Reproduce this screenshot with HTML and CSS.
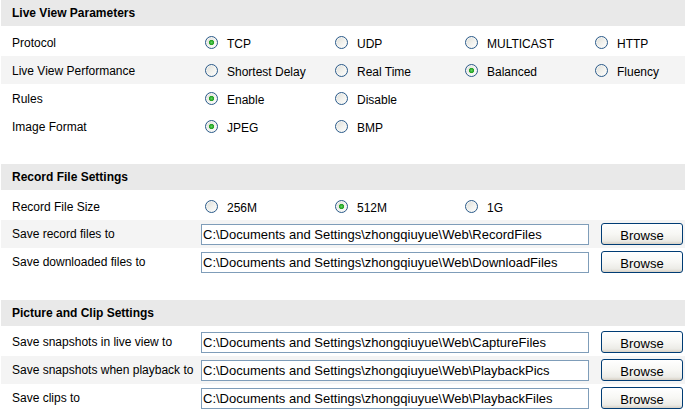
FILE: index.html
```html
<!DOCTYPE html>
<html>
<head>
<meta charset="utf-8">
<title>Local Configuration</title>
<link rel="stylesheet" href="styles.css">
</head>
<body>
<div class="page">
  <section class="group">
    <div class="group-title">Live View Parameters</div>
    <div class="row">
      <div class="label">Protocol</div>
      <div class="options">
        <label class="opt"><input type="radio" name="protocol" checked><span>TCP</span></label>
        <label class="opt"><input type="radio" name="protocol"><span>UDP</span></label>
        <label class="opt"><input type="radio" name="protocol"><span>MULTICAST</span></label>
        <label class="opt"><input type="radio" name="protocol"><span>HTTP</span></label>
      </div>
    </div>
    <div class="row alt">
      <div class="label">Live View Performance</div>
      <div class="options">
        <label class="opt"><input type="radio" name="perf"><span>Shortest Delay</span></label>
        <label class="opt"><input type="radio" name="perf"><span>Real Time</span></label>
        <label class="opt"><input type="radio" name="perf" checked><span>Balanced</span></label>
        <label class="opt"><input type="radio" name="perf"><span>Fluency</span></label>
      </div>
    </div>
    <div class="row">
      <div class="label">Rules</div>
      <div class="options">
        <label class="opt"><input type="radio" name="rules" checked><span>Enable</span></label>
        <label class="opt"><input type="radio" name="rules"><span>Disable</span></label>
      </div>
    </div>
    <div class="row">
      <div class="label">Image Format</div>
      <div class="options">
        <label class="opt"><input type="radio" name="fmt" checked><span>JPEG</span></label>
        <label class="opt"><input type="radio" name="fmt"><span>BMP</span></label>
      </div>
    </div>
  </section>

  <section class="group">
    <div class="group-title">Record File Settings</div>
    <div class="row">
      <div class="label">Record File Size</div>
      <div class="options">
        <label class="opt"><input type="radio" name="size"><span>256M</span></label>
        <label class="opt"><input type="radio" name="size" checked><span>512M</span></label>
        <label class="opt"><input type="radio" name="size"><span>1G</span></label>
      </div>
    </div>
    <div class="row alt">
      <div class="label label-file">Save record files to</div>
      <div class="file">
        <input class="path" type="text" value="C:\Documents and Settings\zhongqiuyue\Web\RecordFiles">
        <button class="browse" type="button">Browse</button>
      </div>
    </div>
    <div class="row">
      <div class="label label-file">Save downloaded files to</div>
      <div class="file">
        <input class="path" type="text" value="C:\Documents and Settings\zhongqiuyue\Web\DownloadFiles">
        <button class="browse" type="button">Browse</button>
      </div>
    </div>
  </section>

  <section class="group">
    <div class="group-title">Picture and Clip Settings</div>
    <div class="row">
      <div class="label label-file">Save snapshots in live view to</div>
      <div class="file">
        <input class="path" type="text" value="C:\Documents and Settings\zhongqiuyue\Web\CaptureFiles">
        <button class="browse" type="button">Browse</button>
      </div>
    </div>
    <div class="row alt">
      <div class="label label-file">Save snapshots when playback to</div>
      <div class="file">
        <input class="path" type="text" value="C:\Documents and Settings\zhongqiuyue\Web\PlaybackPics">
        <button class="browse" type="button">Browse</button>
      </div>
    </div>
    <div class="row">
      <div class="label label-file">Save clips to</div>
      <div class="file">
        <input class="path" type="text" value="C:\Documents and Settings\zhongqiuyue\Web\PlaybackFiles">
        <button class="browse" type="button">Browse</button>
      </div>
    </div>
  </section>
</div>
</body>
</html>
```
FILE: styles.css
```css
html, body {
  margin: 0;
  padding: 0;
  background: #ffffff;
}

body {
  font-family: "Liberation Sans", Arial, sans-serif;
  font-size: 12px;
  color: #000000;
  overflow: hidden;
}

.page {
  margin-left: 1px;
}

.group {
  margin-bottom: 24px;
}

.group:last-child {
  margin-bottom: 0;
}

.group-title {
  height: 26px;
  line-height: 26px;
  padding-left: 11px;
  background: #e9e9e9;
  font-weight: bold;
  margin-bottom: 2px;
}

.row {
  display: grid;
  grid-template-columns: 200px minmax(0, 1fr);
  align-items: center;
  height: 28px;
}

.row.alt {
  background: #f4f4f4;
}

.label {
  padding-left: 11px;
  white-space: nowrap;
  padding-top: 2px;
}

.label-file {
  padding-top: 0;
}

.options {
  display: flex;
  align-items: center;
  padding-top: 1px;
  min-width: 0;
}

.opt {
  flex: none;
  width: 130px;
  display: flex;
  align-items: center;
  white-space: nowrap;
}

.opt:nth-child(4) {
  width: auto;
}

.opt span {
  margin-left: 9px;
  padding-top: 2px;
}

.opt input {
  -webkit-appearance: none;
  appearance: none;
  box-sizing: border-box;
  width: 13px;
  height: 13px;
  margin: 0 0 0 4px;
  border: 1px solid #2a5a8a;
  border-radius: 50%;
  background: linear-gradient(135deg, #dcdcd6 0%, #f2f2ee 55%, #ffffff 100%);
  box-shadow: inset 0 0 0 1px #f6f6f3;
}

.opt input:checked {
  background:
    radial-gradient(circle at 50% 50%, #5fd25f 0, #21a121 2.2px, rgba(33, 161, 33, 0) 3px),
    linear-gradient(135deg, #dcdcd6 0%, #f2f2ee 55%, #ffffff 100%);
}

.file {
  display: flex;
  align-items: center;
  gap: 12px;
}

.path {
  box-sizing: border-box;
  width: 388px;
  height: 21px;
  margin: 0;
  padding: 0 0 0 1px;
  border: 1px solid #7f9db9;
  background: #ffffff;
  font-family: "Liberation Sans", Arial, sans-serif;
  font-size: 13px;
  color: #000000;
  outline: none;
}

.browse {
  box-sizing: border-box;
  width: 82px;
  height: 22px;
  margin: 0;
  padding: 3px 0 0 0;
  border: 1px solid #003c74;
  border-radius: 3px;
  background: linear-gradient(#ffffff 0%, #f7f7f4 50%, #ecebe6 85%, #d6d0c5 100%);
  font-family: "Liberation Sans", Arial, sans-serif;
  font-size: 13px;
  line-height: 16px;
  color: #000000;
}
```
